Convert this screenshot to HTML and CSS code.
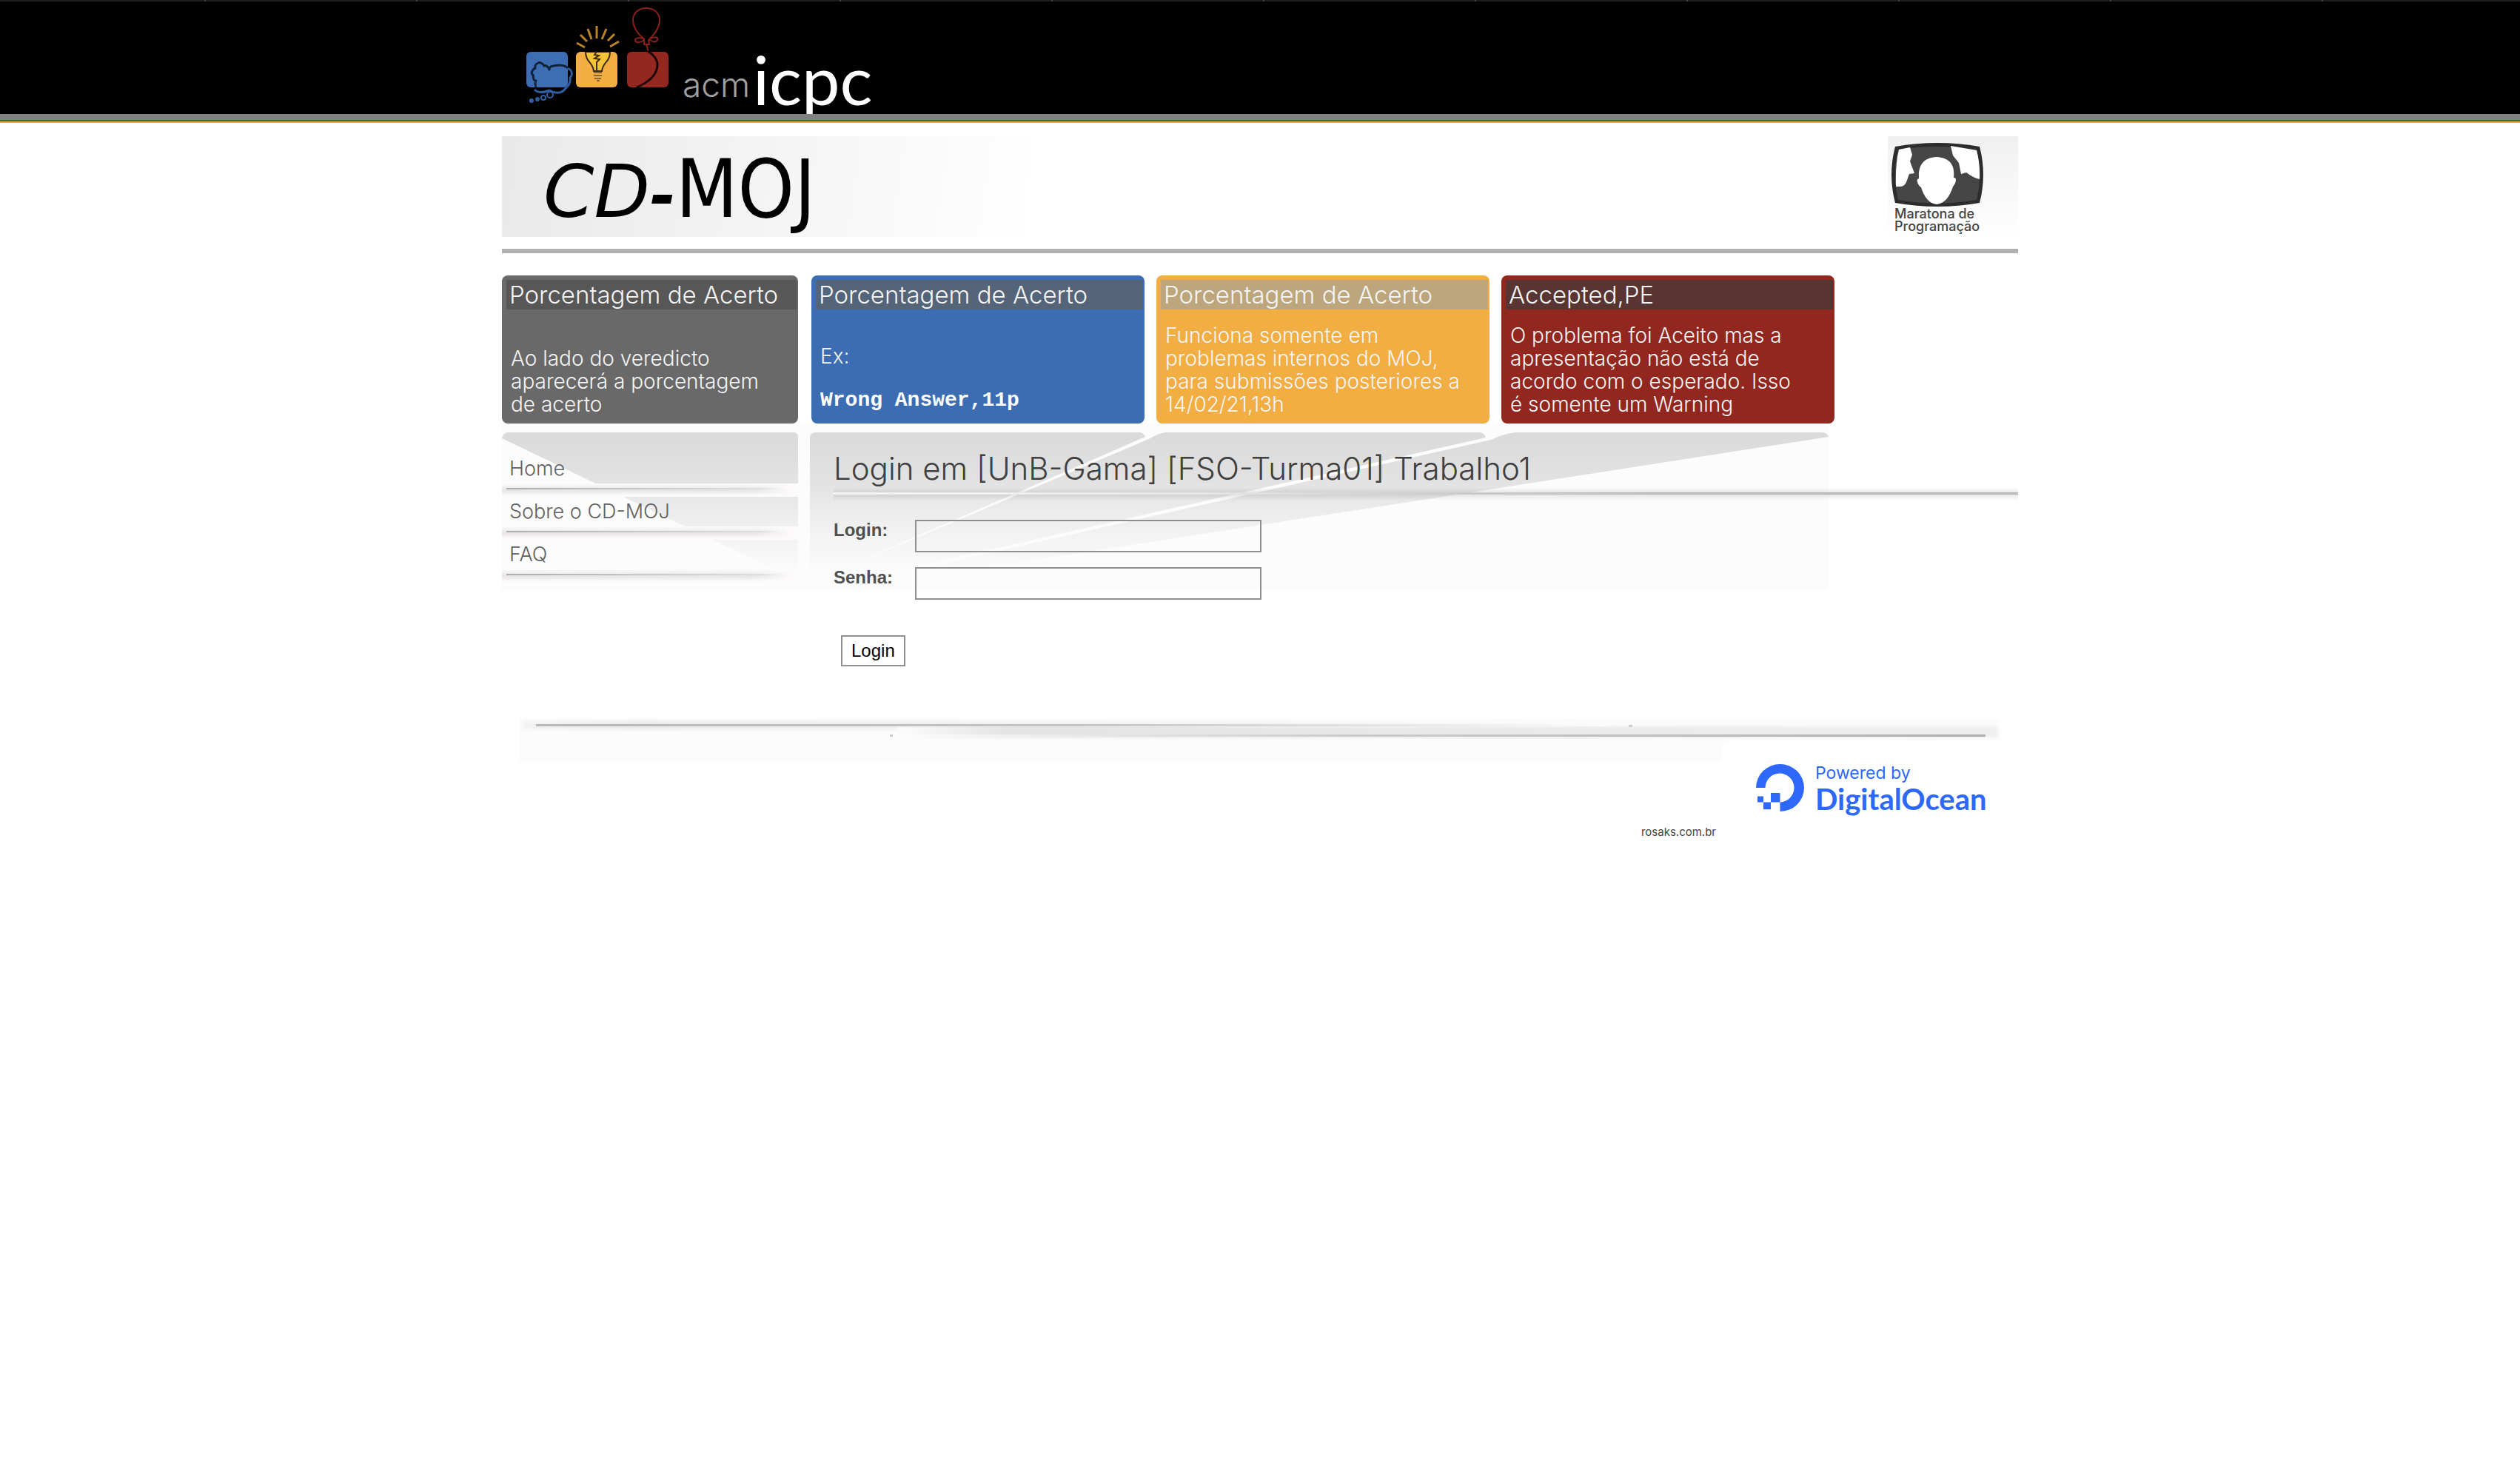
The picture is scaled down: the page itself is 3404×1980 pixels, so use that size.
FILE: index.html
```html
<!DOCTYPE html>
<html lang="pt-BR">
<head>
<meta charset="utf-8">
<meta name="viewport" content="width=device-width, initial-scale=1">
<title>CD-MOJ</title>
<link rel="stylesheet" href="styles.css">
</head>
<body>
<header class="topbar">
  <div class="wrap">
    <svg class="icpc" viewBox="0 0 600 154" role="img" aria-label="acm icpc">
      <rect x="33" y="70" width="56" height="48" rx="6" fill="#3d6eb4"/>
      <g fill="none" stroke-width="3" stroke-linejoin="round">
        <path stroke="#2e5e9f" d="M89 92c6 3 7 9 3 13 1 7-2 11-6 14-4 7-13 8-22 3-7 3-15 4-20-1"/>
        <path stroke="#10213c" d="M46 118c-1-3-2-6 0-9-5 0-3-5-4-8-3 0-2-7 3-9-1-5 2-6 4-7 2-1 6 0 8 4 2-1 5 0 7 5 0-4 2-5 6-5 9-2 15-1 19 3"/>
        <circle cx="65" cy="128" r="4" stroke="#2e5e9f" stroke-width="2"/>
        <circle cx="56" cy="132" r="3" stroke="#2e5e9f" stroke-width="2"/>
      </g>
      <circle cx="48" cy="134" r="3" fill="#2e5e9f"/><circle cx="40" cy="136" r="3" fill="#2e5e9f"/>
      <rect x="100" y="70" width="56" height="48" rx="6" fill="#f3ae43"/>
      <path d="M113 70c0 14 10 14 11 26h11c1-12 11-12 11-26z" fill="#f4c437" stroke="#3c2b10" stroke-width="2"/>
      <path d="M112 69h35" stroke="#000" stroke-width="2"/>
      <path d="M128 70l-3 4 6 1-6 4 7 1-4 4v12" fill="none" stroke="#3c2b10" stroke-width="2"/>
      <path d="M124 98h11M124 102h11M125 106h9M128 109h4" stroke="#8a6529" stroke-width="2"/>
      <path d="M128 35v17M116 39l5 14M141 39l-6 14M106 47l9 9M152 46l-9 9M101 58l11 6M158 56l-12 7" stroke="#b98226" stroke-width="3"/>
      <rect x="169" y="70" width="56" height="48" rx="6" fill="#94271f"/>
      <path d="M192 53c-7-6-15-16-15-26 0-9 7-16 18-16s18 7 18 16c0 10-7 20-14 26M192 52c-9-2-13 0-12 3 2 4 8 2 12-1zM200 52c8-3 12-1 10 2-2 4-7 2-10 0zM192 54v6h7l-1-7M195 60l3 10" fill="none" stroke="#8b211b" stroke-width="2"/>
      <path d="M197 69c7 4 14 12 13 20-1 13-12 22-28 29" fill="none" stroke="#160504" stroke-width="3"/>
      <text x="244" y="131" class="icpc-acm">acm</text>
      <text x="339" y="142" class="icpc-name">icpc</text>
    </svg>
  </div>
</header>

<div class="wrap">
  <div class="banner">
    <a class="brand" href="#"><i>CD<b>-</b></i><span>MOJ</span></a>
    <div class="maratona">
      <svg viewBox="0 0 126 88" aria-hidden="true">
        <path d="M6 6Q63-4 120 6Q130 44 120 82Q63 92 6 82Q-4 44 6 6Z" fill="#2c2c2c"/>
        <path d="M10 10Q63 2 116 10Q124 44 116 78Q63 87 10 78Q2 44 10 10Z" fill="#464646"/>
        <path d="M11 10L26 7 29 17 26 26 32 42 25 43C21 53 21 60 12 60L7 60Q6 30 11 10ZM81 5L116 11Q121 30 120 50 113 49 102 41L95 43 92 28 84 18ZM38 49C37 31 44 21 62 20C80 21 87 31 85 48C90 47 88 56 84 60C80 73 73 83 62 84C52 83 45 74 41 61C37 59 33 50 38 49Z" fill="#fff"/>
      </svg>
      <p>Maratona de<br>Programação</p>
    </div>
  </div>

  <section class="cards">
    <article class="card gray"><h2>Porcentagem de Acerto</h2><p>Ao lado do veredicto<br>aparecerá a porcentagem<br>de acerto</p></article>
    <article class="card blue"><h2>Porcentagem de Acerto</h2><p>Ex:</p><code>Wrong Answer,11p</code></article>
    <article class="card yellow"><h2>Porcentagem de Acerto</h2><p>Funciona somente em<br>problemas internos do MOJ,<br>para submissões posteriores a<br>14/02/21,13h</p></article>
    <article class="card red"><h2>Accepted,PE</h2><p>O problema foi Aceito mas a<br>apresentação não está de<br>acordo com o esperado. Isso<br>é somente um Warning</p></article>
  </section>

  <div class="stage">
    <svg class="rays" viewBox="0 0 1792 226" preserveAspectRatio="none" aria-hidden="true">
      <defs><linearGradient id="fade" gradientUnits="userSpaceOnUse" x1="0" y1="12" x2="0" y2="198">
        <stop offset="0" stop-color="#dbdada"/><stop offset=".35" stop-color="#e2e2e2"/><stop offset=".75" stop-color="#f3f3f3"/><stop offset="1" stop-color="#fcfbfc"/>
      </linearGradient></defs>
      <rect width="1792" height="226" fill="#fcfcfc"/>
      <g fill="url(#fade)">
        <path d="M0 20Q2 12 8 12H394Q400 12 400 18V198H370Z"/>
        <path d="M416 20Q416 12 424 12H862Q866 12 869 18L455 198H416Z"/>
        <path d="M897 12H1322Q1328 14 1329 19L550 195H464L876 20Q887 13 897 12Z"/>
        <path d="M1369 12H1784Q1790 12 1792 18L632 198H556L1336 22Q1352 14 1369 12Z"/>
      </g>
    </svg>
    <nav class="menu">
      <a href="#">Home</a>
      <a href="#">Sobre o CD-MOJ</a>
      <a href="#">FAQ</a>
    </nav>
    <main class="content">
      <h1>Login em [UnB-Gama] [FSO-Turma01] Trabalho1</h1>
      <form class="login">
        <label for="login">Login:</label><input id="login" type="text">
        <label for="senha">Senha:</label><input id="senha" type="password">
        <button type="submit">Login</button>
      </form>
    </main>
  </div>

  <footer class="foot">
    <svg class="foot-rule" viewBox="0 0 2000 30" preserveAspectRatio="none" aria-hidden="true">
      <defs>
        <linearGradient id="r1"><stop offset="0" stop-color="#b8b8b8"/><stop offset=".5" stop-color="#c4c4c4"/><stop offset="1" stop-color="#fcfcfc"/></linearGradient>
        <linearGradient id="r2"><stop offset="0" stop-color="#fcfcfc"/><stop offset=".4" stop-color="#cccccc"/><stop offset="1" stop-color="#aeaeae"/></linearGradient>
        <linearGradient id="g1"><stop offset="0" stop-color="#f4f2f3"/><stop offset=".1" stop-color="#ebe9ea"/><stop offset="1" stop-color="#fcfcfc"/></linearGradient>
        <linearGradient id="g2"><stop offset="0" stop-color="#fcfcfc"/><stop offset=".1" stop-color="#e4e3e3"/><stop offset="1" stop-color="#f0eff0"/></linearGradient>
        <filter id="soft" x="-5%" y="-50%" width="110%" height="200%"><feGaussianBlur stdDeviation="2"/></filter>
      </defs>
      <rect width="2000" height="30" fill="#fcfcfc"/>
      <rect x="4" y="4" width="1480" height="11" fill="url(#g1)" filter="url(#soft)"/>
      <rect x="510" y="11" width="1486" height="15" fill="url(#g2)" filter="url(#soft)"/>
      <rect x="22" y="8" width="1450" height="3" fill="url(#r1)"/>
      <rect x="520" y="22" width="1460" height="3" fill="url(#r2)"/>
      <rect x="500" y="22" width="4" height="3" fill="#ccc"/><rect x="1498" y="9" width="5" height="3" fill="#ccc"/>
    </svg>
    <div class="foot-row">
      <a class="author" href="#">rosaks.com.br</a>
      <a class="ocean" href="#">
        <svg viewBox="0 0 65 64" aria-hidden="true"><path d="M32.500 64V51.500A19.500 19.500 0 1 0 12.500 32H0A32.500 32 0 1 1 32.500 64ZM20 39H32.500V51.500H20ZM10 51.500H20V61H10ZM2 43.500H10V51.500H2Z" fill="#2d68f8"/></svg>
        <span class="ocean-text"><span>Powered by</span><strong>DigitalOcean</strong></span>
      </a>
    </div>
  </footer>
</div>
</body>
</html>
```
FILE: styles.css
```css
* { box-sizing: border-box; }
body { margin: 0; background: #fff; font-family: Inter, "Liberation Sans", sans-serif; }
h1, h2, p { margin: 0; font-weight: 300; }
a { text-decoration: none; }
.wrap { max-width: 2048px; margin: 0 auto; }

.topbar {
  background:
    repeating-linear-gradient(90deg, #1c1c1e 0 276px, #48484a 276px 278px, #1c1c1e 278px 286px) 0 0 / 286px 2px repeat-x,
    #000;
  border-bottom: 2px solid #ecae3c;
  box-shadow: inset 0 -2px #3c7030, inset 0 -10px #808080;
}
.topbar .wrap { height: 164px; }
.icpc { display: block; width: 600px; height: 154px; }
.icpc-acm { font: 300 46px Inter, sans-serif; fill: #a0a0a0; }
.icpc-name { font: 400 92px Lato, sans-serif; fill: #fff; }

.banner {
  display: flex;
  justify-content: space-between;
  margin-top: 18px;
  padding-bottom: 16px;
  border-bottom: 6px solid #b0b0b0;
}
.brand {
  width: 712px;
  height: 136px;
  padding-left: 56px;
  background: linear-gradient(98deg, #e9e9e9, #f3f3f3 45%, #fff);
  font-family: "DejaVu Sans Condensed", "DejaVu Sans", sans-serif;
  font-size: 108px;
  line-height: 144px;
  color: #000;
  white-space: nowrap;
}
.brand i { font-family: "DejaVu Sans", sans-serif; font-size: 98px; }
.brand b { font-size: 84px; }
.maratona { width: 176px; height: 136px; padding: 8px 4px; background: linear-gradient(#f0f0f0, #fff); }
.maratona svg { display: block; width: 126px; height: 88px; }
.maratona p { padding-left: 5px; font-size: 18px; font-weight: 500; line-height: 17px; color: #444; white-space: nowrap; }

.cards {
  display: grid;
  grid-template-columns: 402fr 450fr 450fr 450fr;
  gap: 16px;
  max-width: 1800px;
  margin-top: 30px;
}
.card {
  display: flex;
  flex-direction: column;
  min-height: 200px;
  padding: 6px 2px 10px 6px;
  border-radius: 8px;
  color: #f4f4f4;
}
.card h2 { margin-bottom: auto; padding-left: 4px; font-size: 33px; line-height: 40px; white-space: nowrap; }
.card p, .card code { padding-left: 6px; font-size: 28px; line-height: 31px; white-space: nowrap; }
.card code { margin: 28px 0 6px; font-family: "Liberation Mono", monospace; font-weight: 700; color: #fff; }
.gray { margin-right: 2px; background: #696969; }
.gray h2 { background: #575757; }
.blue { background: #3c6db3; }
.blue h2 { background: #546479; }
.yellow { background: #f2ae43; }
.yellow h2 { background: #bda67b; }
.red { background: #92271f; }
.red h2 { background: #583533; }

.stage { position: relative; display: grid; grid-template-columns: 400px 1fr; column-gap: 48px; }
.rays { position: absolute; top: 0; left: 0; z-index: -1; width: 87.5%; height: 226px; }
.menu { padding-top: 41px; }
.menu a { display: block; padding-left: 10px; font-size: 27px; font-weight: 300; line-height: 40px; color: #606060; }
.menu a::after {
  content: "";
  display: block;
  height: 18px;
  margin-left: -10px;
  background:
    linear-gradient(90deg, #adadad, #dedede 90%, #fcfafb) 6px 6px / 380px 2px no-repeat,
    linear-gradient(90deg, transparent 85%, #fcfafb 98%),
    linear-gradient(#fcfafb, #eeecec 35%, #e6e4e4 50%, #fcfafb 90%);
}
.content { padding-top: 36px; }
.content h1 { font-size: 42px; line-height: 50px; color: #404040; white-space: nowrap; }
.content h1::after {
  content: "";
  display: block;
  height: 18px;
  background:
    linear-gradient(90deg, #f4f4f4, #e6e6e6 30%, #b8b8b8 70%, #b8b8b8) 0 7px / 100% 3px no-repeat,
    linear-gradient(rgba(0, 0, 0, 0), rgba(0, 0, 0, .1) 50%, rgba(0, 0, 0, 0));
}
.login {
  display: grid;
  grid-template-columns: 110px 468px;
  row-gap: 20px;
  margin-top: 26px;
  font-family: "Liberation Sans", sans-serif;
  font-size: 24px;
}
.login label { font-weight: 700; line-height: 28px; color: #505050; }
.login input { height: 44px; border: 2px solid #8f8f8f; background: transparent; font: inherit; }
.login button {
  grid-column: 1 / -1;
  justify-self: start;
  height: 42px;
  margin: 28px 0 0 10px;
  padding: 0 12px;
  border: 2px solid #8f8f8f;
  background: #fff;
  font: inherit;
  color: #000;
}

.foot { margin: 70px 24px 0; }
.foot-rule { display: block; width: 100%; height: 30px; }
.foot-row { display: grid; grid-template-columns: 1fr 376px; background: linear-gradient(#fcfcfc, #fcfcfc) 0 0 / 100% 30px no-repeat; }
.author { align-self: end; padding-right: 8px; text-align: right; font-size: 15px; line-height: 20px; color: #444; }
.ocean { display: flex; gap: 15px; height: 134px; padding: 32px 0 0 46px; border-top-left-radius: 12px; background: #fff; color: #2d68f8; }
.ocean svg { width: 65px; height: 64px; }
.ocean-text { display: flex; flex-direction: column; }
.ocean-text span { font-size: 23px; line-height: 24px; }
.ocean-text strong { font-family: Lato, sans-serif; font-size: 40px; line-height: 46px; }
```
